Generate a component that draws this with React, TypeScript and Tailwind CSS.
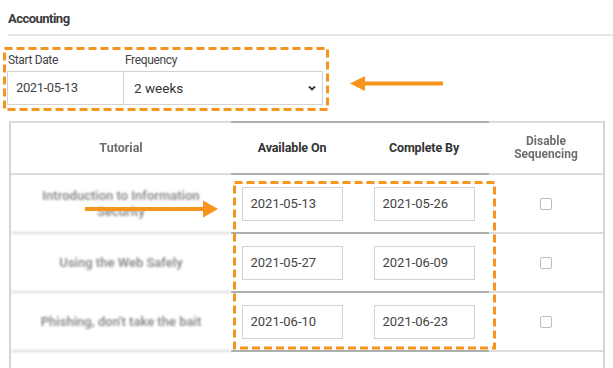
import React from "react";

const rows = [
  { name: ["Introduction to Information", "Security"], a: "2021-05-13", c: "2021-05-26" },
  { name: ["Using the Web Safely"], a: "2021-05-27", c: "2021-06-09" },
  { name: ["Phishing, don't take the bait"], a: "2021-06-10", c: "2021-06-23" },
];

function DateBox({ v }: { v: string }) {
  return (
    <div className="w-[101px] h-[34px] border-[1.5px] border-[#d2d2d2] bg-white flex items-center pl-[8px] text-[13px] text-[#444]">
      {v}
    </div>
  );
}

function Checkbox() {
  return <div className="w-[12px] h-[12px] rounded-[2px] border-[1.5px] border-[#bdbdbd] bg-white" />;
}

export default function App() {
  return (
    <div className="relative w-[613px] h-[368px] overflow-hidden bg-white font-['Roboto','Noto_Sans',sans-serif] text-[#333]">
      <div className="pl-[8px] pt-[9px]">
        <div className="text-[13px] leading-[20px] font-bold text-[#3a3a3a] tracking-[-0.04em]">Accounting</div>
      </div>
      <div className="ml-[8px] mt-[5px] h-[2px] bg-[#e4e4e4]" />

      <div className="ml-[7px] mt-[16px] flex">
        <div className="flex flex-col w-[117px]">
          <div className="pl-[1px] h-[16px] leading-[16px] text-[12px] text-[#444] tracking-[-0.03em]">Start Date</div>
          <div className="mt-[3px] h-[34px] border-[1.5px] border-[#d2d2d2] flex items-center pl-[8px] text-[13px] text-[#444] tracking-[-0.03em]">
            2021-05-13
          </div>
        </div>
        <div className="flex flex-col w-[199px]">
          <div className="pl-[1px] h-[16px] leading-[16px] text-[12px] text-[#444] tracking-[-0.03em]">Frequency</div>
          <div className="mt-[3px] h-[34px] border-[1.5px] border-l-0 border-[#d2d2d2] flex items-center justify-between pl-[10px] pr-[5px] text-[13.5px] text-[#333]">
            <span>2 weeks</span>
            <svg width="10" height="8" viewBox="0 0 10 8">
              <polyline points="2,2.5 5,5.5 8,2.5" fill="none" stroke="#333" strokeWidth="1.8" />
            </svg>
          </div>
        </div>
      </div>

      <div className="ml-[9px] mt-[16px] w-[596px] border-l-2 border-r-2 border-[#d4d4d4]">
        <div className="grid grid-cols-[220px_122px_136px_1fr]">
          <div className="h-[54px] border-t-2 border-b-2 border-[#dcdcdc] flex items-center justify-center text-[12.5px] font-bold text-[#6e6e6e] blur-[0.7px]">
            Tutorial
          </div>
          <div className="h-[54px] border-t-2 border-b-2 border-[#b0b0b0] flex items-center justify-center text-[12.5px] font-bold text-[#333] tracking-[-0.01em]">
            Available On
          </div>
          <div className="h-[54px] border-t-2 border-b-2 border-[#b0b0b0] flex items-center justify-center pl-[6px] text-[12.5px] font-bold text-[#333] tracking-[-0.01em]">
            Complete By
          </div>
          <div className="h-[54px] border-t-2 border-b-2 border-[#dcdcdc] flex flex-col items-center justify-center text-[12px] leading-[13px] font-bold text-[#6e6e6e] blur-[0.7px]">
            <span>Disable</span>
            <span>Sequencing</span>
          </div>
          {rows.map((r, i) => (
            <React.Fragment key={i}>
              <div className="h-[59px] border-b-2 border-[#dcdcdc] flex flex-col items-center justify-center text-[13px] leading-[16px] font-semibold text-[#8a8a8a] blur-[0.8px]">
                {r.name.map((n) => (
                  <span key={n}>{n}</span>
                ))}
              </div>
              <div className="h-[59px] border-b-2 border-[#b0b0b0] flex items-center justify-center">
                <DateBox v={r.a} />
              </div>
              <div className="h-[59px] border-b-2 border-[#b0b0b0] flex items-center justify-center pl-[6px]">
                <DateBox v={r.c} />
              </div>
              <div className="h-[59px] border-b-2 border-[#dcdcdc] flex items-center justify-center">
                <Checkbox />
              </div>
            </React.Fragment>
          ))}
          <div className="h-[30px]" />
        </div>
      </div>

      <svg className="absolute left-0 top-0 pointer-events-none" width="613" height="368" viewBox="0 0 613 368">
        <rect x="4.5" y="48.5" width="323" height="61" fill="none" stroke="#f7941d" strokeWidth="3" strokeDasharray="8 4" />
        <rect x="234.5" y="182.5" width="260" height="165.5" fill="none" stroke="#f7941d" strokeWidth="3" strokeDasharray="8 4" />
        <line x1="443" y1="83.5" x2="362" y2="83.5" stroke="#f7941d" strokeWidth="4" />
        <polygon points="350,83.5 365,76 365,91" fill="#f7941d" />
        <line x1="85" y1="209" x2="206" y2="209" stroke="#f7941d" strokeWidth="4" />
        <polygon points="218,209 203,200.5 203,217.5" fill="#f7941d" />
      </svg>
    </div>
  );
}
